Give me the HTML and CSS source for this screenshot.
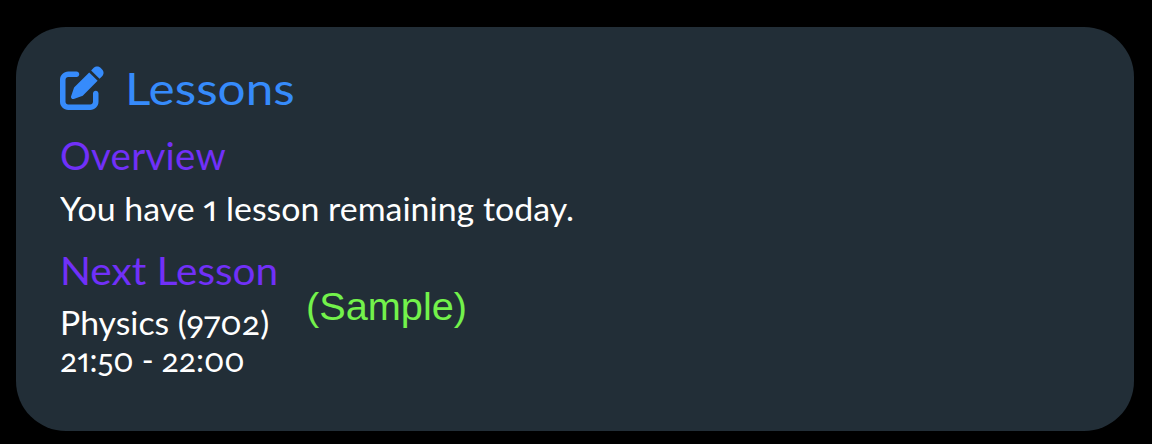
FILE: index.html
```html
<!DOCTYPE html>
<html lang="en">
<head>
<meta charset="utf-8">
<title>Lessons</title>
<link rel="stylesheet" href="styles.css">
</head>
<body>
<section class="card">
  <h1 class="title">
    <svg class="icon" viewBox="0 0 512 512" aria-hidden="true"><path fill="currentColor" d="M471.6 21.7c-21.9-21.9-57.3-21.9-79.2 0L362.3 51.7l97.9 97.9 30.1-30.1c21.9-21.9 21.9-57.3 0-79.2L471.6 21.7zm-299.2 220c-6.1 6.1-10.8 13.6-13.5 21.9l-29.6 88.8c-2.9 8.6-.6 18.1 5.8 24.6s15.9 8.7 24.6 5.8l88.8-29.6c8.2-2.7 15.7-7.4 21.9-13.5L437.7 172.3 339.7 74.3 172.4 241.7zM96 64C43 64 0 107 0 160V416c0 53 43 96 96 96H352c53 0 96-43 96-96V320c0-17.7-14.3-32-32-32s-32 14.3-32 32v96c0 17.7-14.3 32-32 32H96c-17.7 0-32-14.3-32-32V160c0-17.7 14.3-32 32-32h96c17.7 0 32-14.3 32-32s-14.3-32-32-32H96z"/></svg>
    <span class="label">Lessons</span>
  </h1>
  <h2 class="heading overview">Overview</h2>
  <p class="text summary">You have <span class="count">1</span> lesson remaining today.</p>
  <h2 class="heading next">Next Lesson</h2>
  <p class="text subject">Physics (9702)</p>
  <p class="text time">21:50 - 22:00</p>
  <span class="sample">(Sample)</span>
</section>
</body>
</html>
```
FILE: styles.css
```css
body {
  display: flow-root;
  margin: 0;
  background: #000;
  font-family: Lato, "Open Sans", sans-serif;
  font-variant-numeric: oldstyle-nums proportional-nums;
}
.card {
  position: relative;
  box-sizing: border-box;
  width: 1118px;
  height: 404px;
  margin: 27px 0 0 16px;
  padding: 34px 44px;
  border-radius: 50px;
  background: #222e37;
}
.title, .heading, .text { margin: 0; font-weight: 400; white-space: nowrap; }
.title {
  display: flex;
  align-items: center;
  gap: 21px;
  height: 54px;
  color: #368bfb;
  font-size: 45px;
  line-height: 54px;
}
.label, .next, .summary, .subject { transform-origin: left center; }
.label { transform: scaleX(1.1); }
.icon { width: 44px; height: 44px; }
.heading {
  margin-top: 17px;
  color: #7130f8;
  font-size: 38.5px;
  line-height: 46px;
}
.overview { letter-spacing: 0.25px; }
.next { margin-top: 19px; transform: scaleX(1.054); }
.text { color: #fff; font-size: 32px; line-height: 38px; }
.summary { margin-top: 12px; transform: scaleX(1.06); }
.count { font-size: 34px; line-height: 1; }
.subject { margin-top: 11px; transform: scaleX(1.055); }
.time { margin-top: -1px; letter-spacing: -0.1px; }
.sample {
  position: absolute;
  left: 290px;
  top: 256px;
  color: #73f24b;
  font: 39.7px/46px "Liberation Sans", Arial, sans-serif;
}
```
